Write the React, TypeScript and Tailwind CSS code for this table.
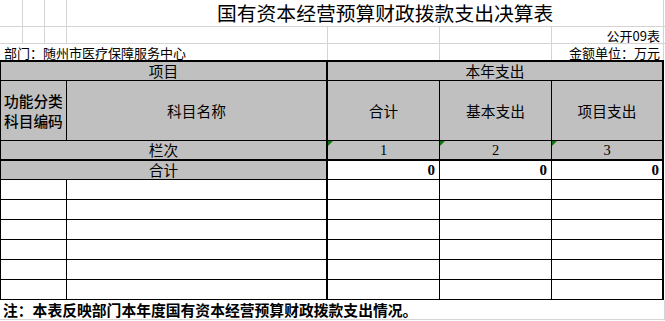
const emptyRows = [0, 1, 2, 3, 4, 5]

function Flag() {
  return (
    <span className="absolute top-0 left-0 w-0 h-0 border-t-[5px] border-r-[5px] border-t-[#0b7a0b] border-r-transparent" />
  )
}

export default function App() {
  return (
    <div className="w-[665px] h-[321px] bg-white overflow-hidden text-black font-['Noto_Sans_CJK_SC','Noto_Sans',sans-serif]">
      {/* title */}
      <div className="flex h-[27px] border-b border-[#d4d4d4]">
        <div className="w-[23px] border-r border-[#d4d4d4]" />
        <div className="w-[22px] border-r border-[#d4d4d4]" />
        <div className="w-[22px] border-r border-[#d4d4d4]" />
        <div className="w-[597px] border-r border-[#d4d4d4] pl-[150px] flex items-center text-[19.8px] leading-[26px]">
          国有资本经营预算财政拨款支出决算表
        </div>
      </div>

      {/* sheet info */}
      <div className="flex h-[17px] border-b border-[#d4d4d4] text-[13px] leading-[13px]">
        <div className="w-[23px] border-r border-[#d4d4d4]" />
        <div className="w-[22px] border-r border-[#d4d4d4]" />
        <div className="w-[22px] border-r border-[#d4d4d4]" />
        <div className="w-[261px] border-r border-[#d4d4d4]" />
        <div className="w-[112px] border-r border-[#d4d4d4]" />
        <div className="w-[112px] border-r border-[#d4d4d4]" />
        <div className="w-[112px] border-r border-[#d4d4d4] flex items-end justify-end pr-[3px] pb-[1px]">公开09表</div>
      </div>
      <div className="flex h-[16px] text-[13px] leading-[13px]">
        <div className="w-[328px] border-r border-[#d4d4d4] flex items-end pl-[4px] pb-[1px]">部门：随州市医疗保障服务中心</div>
        <div className="w-[112px] border-r border-[#d4d4d4]" />
        <div className="w-[112px] border-r border-[#d4d4d4]" />
        <div className="w-[112px] border-r border-[#d4d4d4] flex items-end justify-end pr-[3px] pb-[1px]">金额单位：万元</div>
      </div>

      {/* table */}
      <div className="w-[664px] border-t-2 border-l border-r-2 border-black text-[14.7px] leading-[16px]">
        <div className="flex h-[19px] border-b border-black bg-[#c0c0c0]">
          <div className="w-[327px] border-r-2 border-black flex items-center justify-center">项目</div>
          <div className="flex-1 flex items-center justify-center">本年支出</div>
        </div>
        <div className="flex h-[60px] border-b border-black bg-[#c0c0c0]">
          <div className="w-[66px] border-r border-black flex flex-col justify-center pl-[3px] gap-[4px] font-medium">
            <span>功能分类</span>
            <span>科目编码</span>
          </div>
          <div className="w-[261px] border-r-2 border-black flex items-center justify-center">科目名称</div>
          <div className="w-[112px] border-r border-black flex items-center justify-center">合计</div>
          <div className="w-[112px] border-r border-black flex items-center justify-center">基本支出</div>
          <div className="flex-1 flex items-center justify-center">项目支出</div>
        </div>
        <div className="flex h-[20px] border-b-2 border-black bg-[#c0c0c0]">
          <div className="w-[327px] border-r-2 border-black flex items-center justify-center">栏次</div>
          {["1", "2", "3"].map((n, i) => (
            <div
              key={n}
              className={
                i < 2
                  ? "relative w-[112px] border-r border-black flex items-end justify-center pb-[1px] font-['Liberation_Serif',serif] text-[14.5px]"
                  : "relative flex-1 flex items-end justify-center pb-[1px] font-['Liberation_Serif',serif] text-[14.5px]"
              }
            >
              <Flag />
              {n}
            </div>
          ))}
        </div>
        <div className="flex h-[19px] border-b border-black">
          <div className="w-[327px] border-r-2 border-black bg-[#c0c0c0] flex items-center justify-center">合计</div>
          <div className="w-[112px] border-r border-black flex items-center justify-end pr-[4px] font-['Liberation_Serif',serif] font-bold text-[15px]">0</div>
          <div className="w-[112px] border-r border-black flex items-center justify-end pr-[4px] font-['Liberation_Serif',serif] font-bold text-[15px]">0</div>
          <div className="flex-1 flex items-center justify-end pr-[3px] font-['Liberation_Serif',serif] font-bold text-[15px]">0</div>
        </div>
        {emptyRows.map((r) => (
          <div key={r} className="flex h-[20px] border-b border-black">
            <div className="w-[66px] border-r border-black" />
            <div className="w-[261px] border-r-2 border-black" />
            <div className="w-[112px] border-r border-black" />
            <div className="w-[112px] border-r border-black" />
            <div className="flex-1" />
          </div>
        ))}
      </div>

      {/* note */}
      <div className="w-[665px] h-[20px] border-b border-r border-[#d4d4d4] flex items-center pl-[3px] text-[14.8px] font-bold leading-[16px]">
        注：本表反映部门本年度国有资本经营预算财政拨款支出情况。
      </div>
    </div>
  )
}
